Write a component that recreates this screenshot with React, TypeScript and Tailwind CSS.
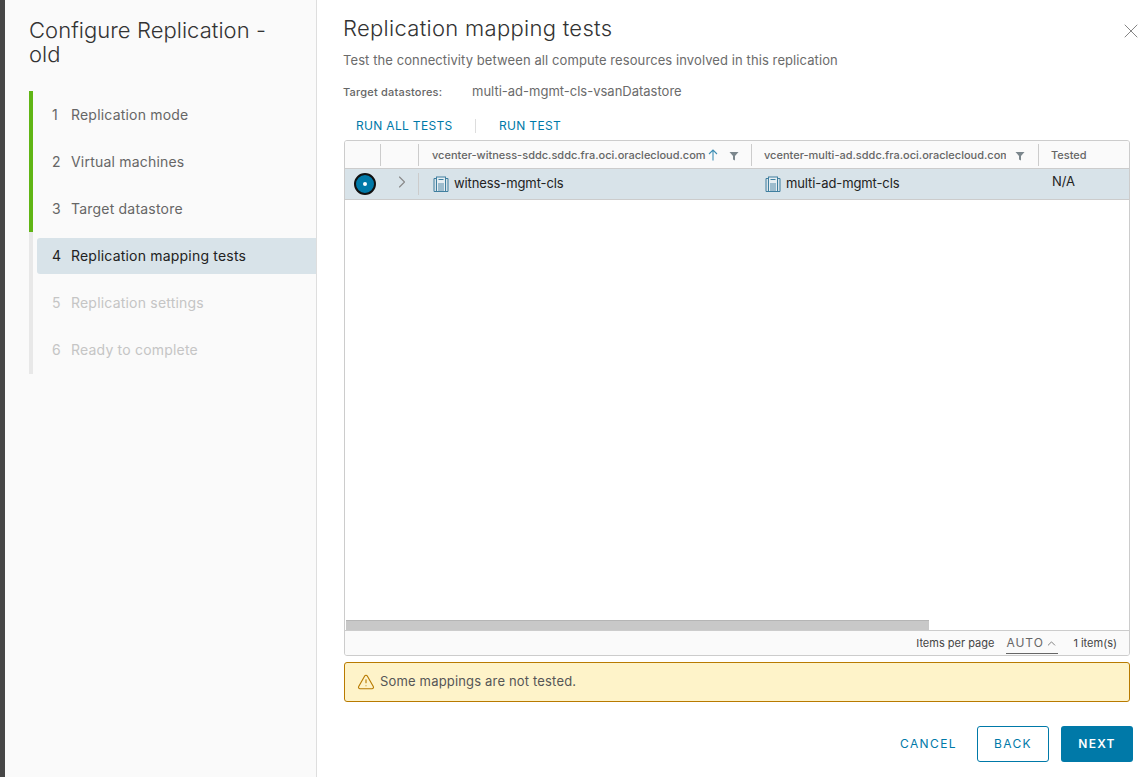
import { ChevronRight, ChevronUp, TriangleAlert, X } from "lucide-react";

const steps = [
  { n: 1, label: "Replication mode", state: "done" },
  { n: 2, label: "Virtual machines", state: "done" },
  { n: 3, label: "Target datastore", state: "done" },
  { n: 4, label: "Replication mapping tests", state: "active" },
  { n: 5, label: "Replication settings", state: "todo" },
  { n: 6, label: "Ready to complete", state: "todo" },
];

const FilterIcon = () => (
  <svg width="10" height="10" viewBox="0 0 10 10" className="mt-[3px] shrink-0">
    <path d="M0.5 1h9L6 5V9.5L4 8.5V5z" fill="#7c878d" />
  </svg>
);

const SortArrow = () => (
  <svg width="10" height="12" viewBox="0 0 10 12" fill="none" className="ml-[2px] shrink-0">
    <path d="M5 11.5V1M1 5l4-4 4 4" stroke="#3f8fb5" strokeWidth="1.1" />
  </svg>
);

const ClusterIcon = () => (
  <svg width="16" height="16" viewBox="0 0 16 16" fill="none" className="shrink-0">
    <path d="M3.5 2.5H1v13h14v-13h-2.5" stroke="#3f7f9f" strokeWidth="1" />
    <rect x="3.5" y="1" width="9" height="14.5" fill="#e6eef2" stroke="#3f7f9f" strokeWidth="1" />
    <path d="M5.5 3.5h5" stroke="#3f7f9f" strokeWidth="1" />
    <rect x="5" y="7" width="6" height="8" fill="#9dbccd" />
  </svg>
);

const HeaderCell = ({ width, children }: { width: string; children?: React.ReactNode }) => (
  <div className={`${width} flex h-[22px] items-center border-r border-[#ccc] last:border-r-0`}>{children}</div>
);

export default function App() {
  return (
    <div className="flex h-[777px] w-[1145px] overflow-hidden bg-white font-['Inter',sans-serif] text-[#565656]">
      <div className="w-[5px] shrink-0 bg-[#464646]" />

      <aside className="w-[312px] shrink-0 border-r border-[#dedede] bg-[#fafafa] pl-6">
        <h1 className="mt-[18px] w-[250px] text-[22px] leading-6 font-light tracking-[0.05px] text-[#333]">
          Configure Replication - old
        </h1>
        <ol className="mt-[25px]">
          {steps.map((s) => (
            <li
              key={s.n}
              className={
                s.state === "done"
                  ? "flex h-[47px] items-center border-l-4 border-[#60b515] pl-1"
                  : "flex h-[47px] items-center border-l-4 border-[#e8e8e8] pl-1 last:h-[48px] last:pb-px"
              }
            >
              <div
                className={
                  s.state === "active"
                    ? "flex h-9 flex-1 items-center rounded-l-[3px] bg-[#d8e3e9] pl-[15px] text-[14px] tracking-[0.2px] text-[#222]"
                    : s.state === "done"
                      ? "flex h-9 flex-1 items-center pl-[15px] text-[14px] tracking-[0.2px] text-[#666]"
                      : "flex h-9 flex-1 items-center pl-[15px] text-[14px] tracking-[0.2px] text-[#c5c5c5]"
                }
              >
                <span className="w-[19px]">{s.n}</span>
                <span>{s.label}</span>
              </div>
            </li>
          ))}
        </ol>
      </aside>

      <main className="flex min-w-0 flex-1 flex-col pl-[26px]">
        <div className="mt-[14px] flex h-7 items-start justify-between pr-[2px]">
          <h2 className="text-[22px] leading-7 font-light tracking-[0.3px] text-[#333]">Replication mapping tests</h2>
          <X size={24} strokeWidth={0.9} className="mt-[5px] text-[#777]" />
        </div>
        <p className="mt-[9px] flex h-5 items-center text-[13px] tracking-[0.09px] text-[#6b6b6b]">
          Test the connectivity between all compute resources involved in this replication
        </p>
        <div className="mt-[11px] flex h-5 items-center text-[13px] text-[#6b6b6b]">
          <span className="w-[129px] text-[11px] font-medium tracking-[0.2px] text-[#666]">Target datastores:</span>
          <span>multi-ad-mgmt-cls-vsanDatastore</span>
        </div>

        <div className="mt-[10px] flex h-7 items-center pl-[13px] text-[12px] tracking-[0.32px] text-[#0079a8]">
          <span className="w-[119px]">RUN ALL TESTS</span>
          <span className="h-[14px] w-px bg-[#ddd]" />
          <span className="ml-[23px]">RUN TEST</span>
        </div>

        <div className="mt-0 ml-px flex h-[516px] w-[786px] flex-col overflow-hidden rounded-[3px] border border-[#ccc]">
          <div className="flex h-7 shrink-0 items-center border-b border-[#ccc] bg-[#fafafa] text-[11px] font-medium text-[#666]">
            <HeaderCell width="w-[36px]" />
            <HeaderCell width="w-[38px]" />
            <HeaderCell width="w-[333px]">
              <span className="mt-px ml-[13px] whitespace-nowrap">vcenter-witness-sddc.sddc.fra.oci.oraclecloud.com</span>
              <SortArrow />
              <span className="ml-[11px]">
                <FilterIcon />
              </span>
            </HeaderCell>
            <HeaderCell width="w-[287px]">
              <span className="mt-px ml-[12px] w-[242px] overflow-hidden whitespace-nowrap">
                vcenter-multi-ad.sddc.fra.oci.oraclecloud.com
              </span>
              <span className="ml-[9px]">
                <FilterIcon />
              </span>
            </HeaderCell>
            <div className="mt-px ml-[12px]">Tested</div>
          </div>

          <div className="flex h-[31px] shrink-0 items-center border-b border-[#ccc] bg-[#d8e3e9] text-[13px] tracking-[-0.1px] text-[#222]">
            <div className="flex w-[36px] justify-center pl-[4px]">
              <span className="flex size-[22px] items-center justify-center rounded-full border-[2.5px] border-[#111] bg-[#0079a8]">
                <span className="size-[4px] rounded-full bg-white" />
              </span>
            </div>
            <div className="flex h-[22px] w-[38px] items-start justify-center border-r border-[#ccc]">
              <ChevronRight size={20} strokeWidth={1.3} className="mt-[-1px] ml-[5px] text-[#888]" />
            </div>
            <div className="flex w-[333px] items-center gap-[5px] pl-[14px]">
              <ClusterIcon />
              <span>witness-mgmt-cls</span>
            </div>
            <div className="flex w-[287px] items-center gap-[5px] pl-[13px]">
              <ClusterIcon />
              <span>multi-ad-mgmt-cls</span>
            </div>
            <div className="mb-[4px] ml-[13px]">N/A</div>
          </div>

          <div className="flex-1 bg-white" />

          <div className="h-[11px] shrink-0 border-b border-[#ccc] bg-white pl-px">
            <div className="h-[10px] w-[583px] border-t border-[#b5b5b5] bg-[#c8c8c8]" />
          </div>

          <div className="flex h-6 shrink-0 items-center justify-end bg-[#fafafa] pr-[12px] text-[11px] text-[#444]">
            <span className="mt-px">Items per page</span>
            <span className="mt-px ml-[12px] flex h-[21px] w-[52px] items-center justify-between border-b border-[#666] text-[12px] tracking-[1px] text-[#666]">
              AUTO
              <ChevronUp size={13} strokeWidth={1.5} />
            </span>
            <span className="mt-px ml-[15px]">1 item(s)</span>
          </div>
        </div>

        <div className="mt-[6px] ml-px flex h-[40px] w-[786px] items-center rounded-[3px] border border-[#b87a00] bg-[#fef3c9] pl-[12px] text-[13px] tracking-[0.17px] text-[#565656]">
          <TriangleAlert size={18} strokeWidth={1.5} className="text-[#b87a00]" />
          <span className="ml-[5px]">Some mappings are not tested.</span>
        </div>

        <div className="mt-[24px] flex h-9 items-center justify-end pr-3 text-[12px] font-semibold tracking-[1.2px]">
          <span className="mr-[20px] font-normal tracking-[1.4px] text-[#0079a8]">CANCEL</span>
          <span className="flex h-9 w-[72px] items-center justify-center rounded-[3px] border border-[#0079a8] font-normal tracking-[1.4px] text-[#0079a8]">
            BACK
          </span>
          <span className="ml-3 flex h-9 w-[72px] items-center justify-center rounded-[3px] bg-[#0079a8] text-white">
            NEXT
          </span>
        </div>
      </main>
    </div>
  );
}
